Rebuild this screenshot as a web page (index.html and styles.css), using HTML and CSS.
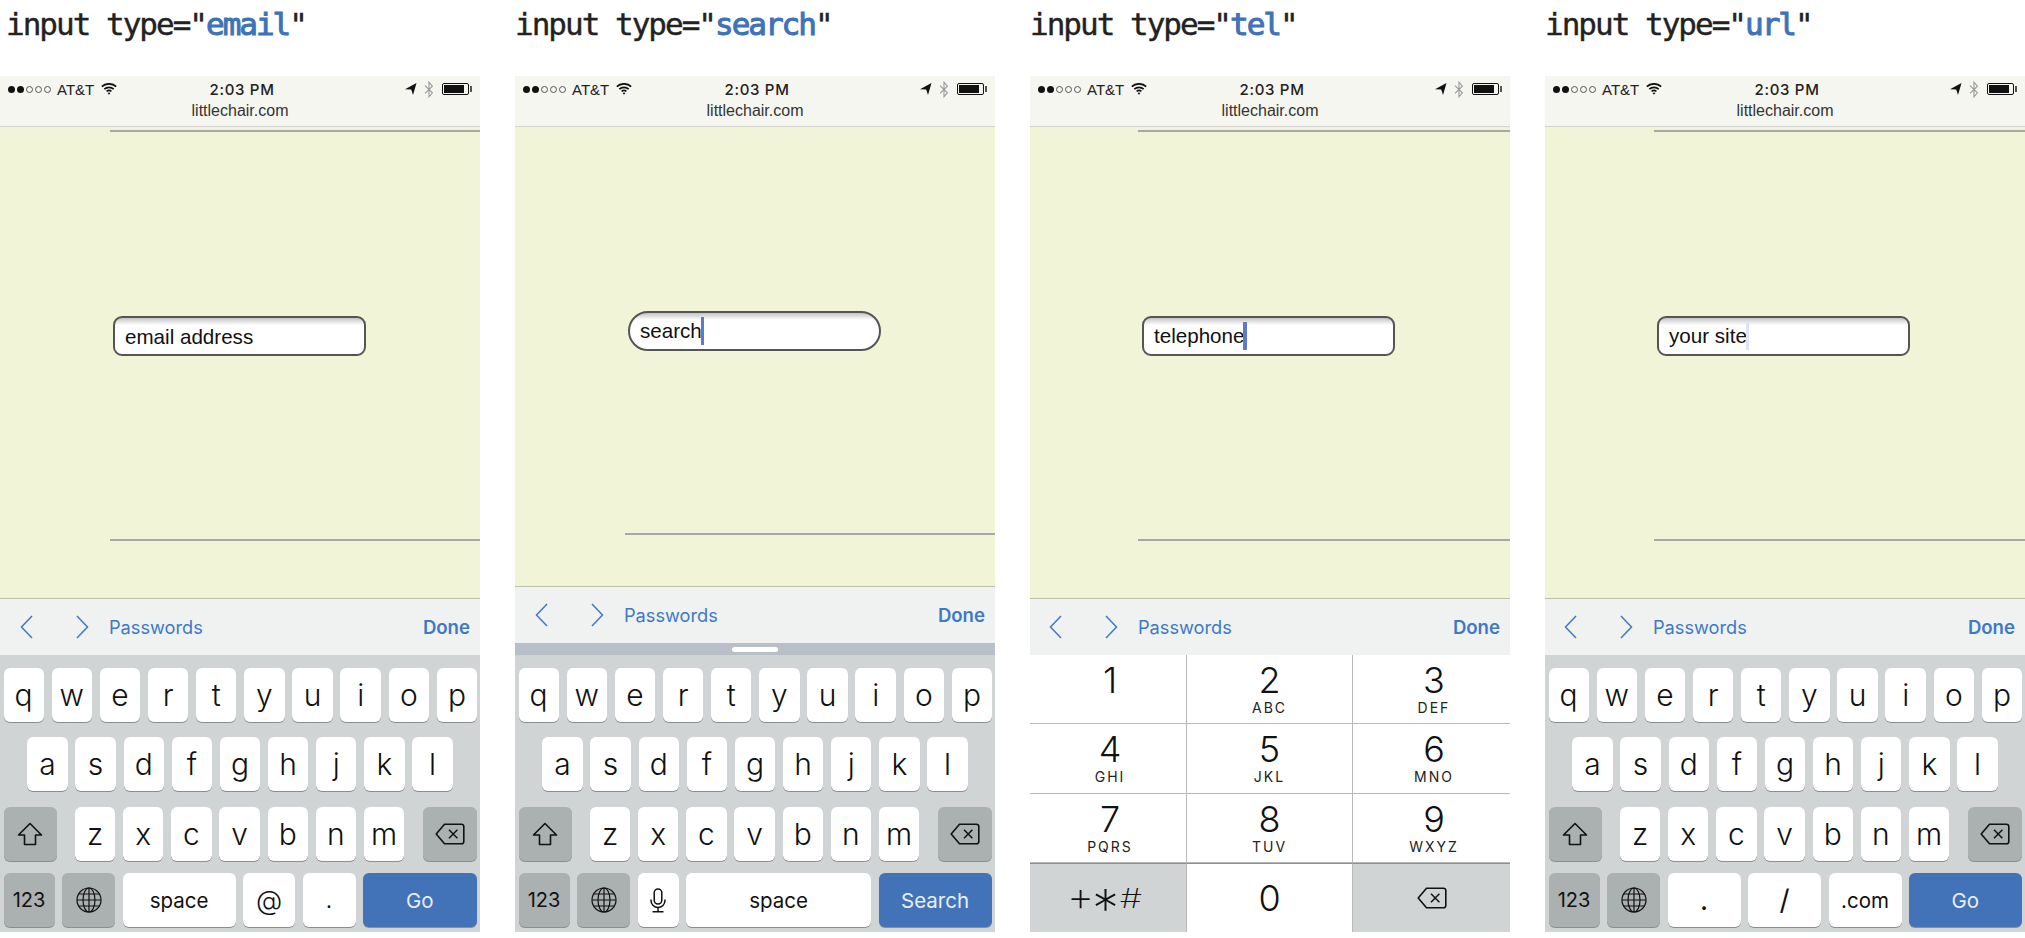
FILE: index.html
```html
<!DOCTYPE html>
<html>
<head>
    <title>input types on iOS</title>
    <link rel="stylesheet" href="styles.css">
</head>
<body>
    <svg class="defs" xmlns="http://www.w3.org/2000/svg">
        <symbol id="i-wifi" viewBox="0 0 16 12"><path d="M.8 3.6C4.8-.1 11.2-.1 15.2 3.6M3.3 6.1c2.7-2.4 6.7-2.4 9.4 0M5.6 8.4c1.4-1.1 3.4-1.1 4.8 0" fill="none" stroke="#111" stroke-width="1.7"/><path d="M6.6 10 8 11.7 9.4 10a2.2 2.2 0 0 0-2.8 0z" fill="#111"/></symbol>
        <symbol id="i-loc" viewBox="0 0 12 12"><path d="M0 6.2 11.5 0 8 12 6.2 6.4z" fill="#111"/></symbol>
        <symbol id="i-bt" viewBox="0 0 10 17"><path d="M1 4.6 8.4 11.8 5 15.8V1.2L8.4 5.2 1 12.4" fill="none" stroke="#9a9a9a" stroke-width="1.1"/></symbol>
        <symbol id="i-back" viewBox="0 0 13 24"><path d="M12 1 1.5 12 12 23" fill="none" stroke="#3d79c8" stroke-width="1.5"/></symbol>
        <symbol id="i-next" viewBox="0 0 13 24"><path d="M1 1 11.5 12 1 23" fill="none" stroke="#3d79c8" stroke-width="1.5"/></symbol>
        <symbol id="i-shift" viewBox="0 0 26 24"><path d="M13 1.5 24.5 13H18.5V22.5H7.5V13H1.5z" fill="none" stroke="#111" stroke-width="1.6" stroke-linejoin="round"/></symbol>
        <symbol id="i-del" viewBox="0 0 30 22"><path d="M9.5 1.2H26.5A2.3 2.3 0 0 1 28.8 3.5V18.5A2.3 2.3 0 0 1 26.5 20.8H9.5L1.2 11z" fill="none" stroke="#111" stroke-width="1.6" stroke-linejoin="round"/><path d="M14 6.8 22.4 15.2M22.4 6.8 14 15.2" fill="none" stroke="#111" stroke-width="1.5"/></symbol>
        <symbol id="i-globe" viewBox="0 0 26 26"><g fill="none" stroke="#111" stroke-width="1.2"><circle cx="13" cy="13" r="12"/><ellipse cx="13" cy="13" rx="6" ry="12"/><path d="M13 1V25M1 13H25M2.6 7H23.4M2.6 19H23.4"/></g></symbol>
        <symbol id="i-mic" viewBox="0 0 16 25"><g fill="none" stroke="#111" stroke-width="1.5"><rect x="4.2" y="1" width="7.6" height="15" rx="3.8"/><path d="M1 11.5V12.5A7 7 0 0 0 15 12.5V11.5M8 19.5V23.5M2.5 23.8H13.5"/></g></symbol>
    </svg>

    <div class="phones">
        <section class="col col-first">
            <h2 class="type-title">input type="<b>email</b>"</h2>
            <div class="phone">
                <div class="status">
                    <div class="status-top">
                        <div class="carrier"><i class="dot"></i><i class="dot"></i><i class="dot off"></i><i class="dot off"></i><i class="dot off"></i><span class="att">AT&amp;T</span><svg class="wifi"><use href="#i-wifi"/></svg></div>
                        <div class="time">2:03 PM</div>
                        <div class="indicators"><svg class="loc"><use href="#i-loc"/></svg><svg class="bt"><use href="#i-bt"/></svg><span class="battery"><span class="charge"></span></span></div>
                    </div>
                    <div class="site">littlechair.com</div>
                </div>
                <div class="page">
                    <div class="box"><div class="field">email address</div></div>
                </div>
                <div class="accessory">
                    <svg class="chev"><use href="#i-back"/></svg>
                    <svg class="chev chev-next"><use href="#i-next"/></svg>
                    <span class="pw">Passwords</span>
                    <span class="done">Done</span>
                </div>
                <div class="kb">
                    <div class="row"><span class="key">q</span><span class="key">w</span><span class="key">e</span><span class="key">r</span><span class="key">t</span><span class="key">y</span><span class="key">u</span><span class="key">i</span><span class="key">o</span><span class="key">p</span></div>
                    <div class="row row-mid"><span class="key">a</span><span class="key">s</span><span class="key">d</span><span class="key">f</span><span class="key">g</span><span class="key">h</span><span class="key">j</span><span class="key">k</span><span class="key">l</span></div>
                    <div class="row row-low"><span class="key fn k-shift"><svg class="ic-shift"><use href="#i-shift"/></svg></span><span class="key">z</span><span class="key">x</span><span class="key">c</span><span class="key">v</span><span class="key">b</span><span class="key">n</span><span class="key">m</span><span class="key fn k-del"><svg class="ic-del"><use href="#i-del"/></svg></span></div>
                    <div class="row row-bottom"><span class="key fn k-123">123</span><span class="key fn k-globe"><svg class="ic-globe"><use href="#i-globe"/></svg></span><span class="key small k-space">space</span><span class="key k-at">@</span><span class="key small k-dot">.</span><span class="key go">Go</span></div>
                </div>
            </div>
        </section>

        <section class="col">
            <h2 class="type-title">input type="<b>search</b>"</h2>
            <div class="phone">
                <div class="status">
                    <div class="status-top">
                        <div class="carrier"><i class="dot"></i><i class="dot"></i><i class="dot off"></i><i class="dot off"></i><i class="dot off"></i><span class="att">AT&amp;T</span><svg class="wifi"><use href="#i-wifi"/></svg></div>
                        <div class="time">2:03 PM</div>
                        <div class="indicators"><svg class="loc"><use href="#i-loc"/></svg><svg class="bt"><use href="#i-bt"/></svg><span class="battery"><span class="charge"></span></span></div>
                    </div>
                    <div class="site">littlechair.com</div>
                </div>
                <div class="page page-scrolled">
                    <div class="box"><div class="field field-search">search<span class="caret"></span></div></div>
                </div>
                <div class="accessory">
                    <svg class="chev"><use href="#i-back"/></svg>
                    <svg class="chev chev-next"><use href="#i-next"/></svg>
                    <span class="pw">Passwords</span>
                    <span class="done">Done</span>
                </div>
                <div class="handle-bar"><span class="handle"></span></div>
                <div class="kb">
                    <div class="row"><span class="key">q</span><span class="key">w</span><span class="key">e</span><span class="key">r</span><span class="key">t</span><span class="key">y</span><span class="key">u</span><span class="key">i</span><span class="key">o</span><span class="key">p</span></div>
                    <div class="row row-mid"><span class="key">a</span><span class="key">s</span><span class="key">d</span><span class="key">f</span><span class="key">g</span><span class="key">h</span><span class="key">j</span><span class="key">k</span><span class="key">l</span></div>
                    <div class="row row-low"><span class="key fn k-shift"><svg class="ic-shift"><use href="#i-shift"/></svg></span><span class="key">z</span><span class="key">x</span><span class="key">c</span><span class="key">v</span><span class="key">b</span><span class="key">n</span><span class="key">m</span><span class="key fn k-del"><svg class="ic-del"><use href="#i-del"/></svg></span></div>
                    <div class="row row-bottom"><span class="key fn k-123">123</span><span class="key fn k-globe"><svg class="ic-globe"><use href="#i-globe"/></svg></span><span class="key k-mic"><svg class="ic-mic"><use href="#i-mic"/></svg></span><span class="key small k-space-long">space</span><span class="key go">Search</span></div>
                </div>
            </div>
        </section>

        <section class="col col-tel">
            <h2 class="type-title">input type="<b>tel</b>"</h2>
            <div class="phone">
                <div class="status">
                    <div class="status-top">
                        <div class="carrier"><i class="dot"></i><i class="dot"></i><i class="dot off"></i><i class="dot off"></i><i class="dot off"></i><span class="att">AT&amp;T</span><svg class="wifi"><use href="#i-wifi"/></svg></div>
                        <div class="time">2:03 PM</div>
                        <div class="indicators"><svg class="loc"><use href="#i-loc"/></svg><svg class="bt"><use href="#i-bt"/></svg><span class="battery"><span class="charge"></span></span></div>
                    </div>
                    <div class="site">littlechair.com</div>
                </div>
                <div class="page">
                    <div class="box"><div class="field">telephone<span class="caret"></span></div></div>
                </div>
                <div class="accessory">
                    <svg class="chev"><use href="#i-back"/></svg>
                    <svg class="chev chev-next"><use href="#i-next"/></svg>
                    <span class="pw">Passwords</span>
                    <span class="done">Done</span>
                </div>
                <div class="numpad">
                    <div class="num"><span class="digit">1</span></div>
                    <div class="num"><span class="digit">2</span><span class="abc">ABC</span></div>
                    <div class="num"><span class="digit">3</span><span class="abc">DEF</span></div>
                    <div class="num"><span class="digit">4</span><span class="abc">GHI</span></div>
                    <div class="num"><span class="digit">5</span><span class="abc">JKL</span></div>
                    <div class="num"><span class="digit">6</span><span class="abc">MNO</span></div>
                    <div class="num"><span class="digit">7</span><span class="abc">PQRS</span></div>
                    <div class="num"><span class="digit">8</span><span class="abc">TUV</span></div>
                    <div class="num"><span class="digit">9</span><span class="abc">WXYZ</span></div>
                    <div class="num num-fn"><span class="symbols"><span class="plus">+</span><span class="star">*</span><span class="hash">#</span></span></div>
                    <div class="num num-zero"><span class="digit">0</span></div>
                    <div class="num num-fn"><svg class="ic-del"><use href="#i-del"/></svg></div>
                </div>
            </div>
        </section>

        <section class="col col-url">
            <h2 class="type-title">input type="<b>url</b>"</h2>
            <div class="phone">
                <div class="status">
                    <div class="status-top">
                        <div class="carrier"><i class="dot"></i><i class="dot"></i><i class="dot off"></i><i class="dot off"></i><i class="dot off"></i><span class="att">AT&amp;T</span><svg class="wifi"><use href="#i-wifi"/></svg></div>
                        <div class="time">2:03 PM</div>
                        <div class="indicators"><svg class="loc"><use href="#i-loc"/></svg><svg class="bt"><use href="#i-bt"/></svg><span class="battery"><span class="charge"></span></span></div>
                    </div>
                    <div class="site">littlechair.com</div>
                </div>
                <div class="page">
                    <div class="box"><div class="field">your site<span class="caret caret-faint"></span></div></div>
                </div>
                <div class="accessory">
                    <svg class="chev"><use href="#i-back"/></svg>
                    <svg class="chev chev-next"><use href="#i-next"/></svg>
                    <span class="pw">Passwords</span>
                    <span class="done">Done</span>
                </div>
                <div class="kb">
                    <div class="row"><span class="key">q</span><span class="key">w</span><span class="key">e</span><span class="key">r</span><span class="key">t</span><span class="key">y</span><span class="key">u</span><span class="key">i</span><span class="key">o</span><span class="key">p</span></div>
                    <div class="row row-mid"><span class="key">a</span><span class="key">s</span><span class="key">d</span><span class="key">f</span><span class="key">g</span><span class="key">h</span><span class="key">j</span><span class="key">k</span><span class="key">l</span></div>
                    <div class="row row-low"><span class="key fn k-shift"><svg class="ic-shift"><use href="#i-shift"/></svg></span><span class="key">z</span><span class="key">x</span><span class="key">c</span><span class="key">v</span><span class="key">b</span><span class="key">n</span><span class="key">m</span><span class="key fn k-del"><svg class="ic-del"><use href="#i-del"/></svg></span></div>
                    <div class="row row-bottom"><span class="key fn k-123">123</span><span class="key fn k-globe"><svg class="ic-globe"><use href="#i-globe"/></svg></span><span class="key k-url">.</span><span class="key k-url">/</span><span class="key small k-url">.com</span><span class="key go">Go</span></div>
                </div>
            </div>
        </section>
    </div>
</body>
</html>
```

FILE: styles.css
```css
:root {
    --page: #f1f4d6;
    --bar: #f6f6f1;
    --accessory: #f0f1f1;
    --kb: #d1d4d5;
    --fn: #abb1b0;
    --blue: #4273b8;
    --link: #3d79c8;
}
body { margin: 0; background: #fff; color: #111; font-family: 'Inter', 'Liberation Sans', sans-serif; overflow: hidden; }
.defs { display: none; }
.phones { display: flex; gap: 35px; }
.col { width: 480px; flex: none; }
.type-title { margin: 0; height: 76px; padding-top: 4px; box-sizing: border-box; font-family: 'DejaVu Sans Mono', monospace; font-size: 31px; line-height: 40px; letter-spacing: -2px; font-weight: normal; color: #222; white-space: pre; -webkit-text-stroke: .4px #222; }
.type-title b { color: #3f72b8; font-weight: normal; -webkit-text-stroke: 1px #3f72b8; }
.col-first .type-title { padding-left: 6px; }
.phone { height: 856px; display: flex; flex-direction: column; }

/* status bar */
.status { height: 51px; box-sizing: border-box; background: var(--bar); border-bottom: 1px solid #d3d3cd; flex: none; }
.status-top { display: grid; grid-template-columns: 1fr auto 1fr; align-items: center; height: 26px; padding: 0 11px 0 8px; }
.carrier, .indicators { display: flex; align-items: center; }
.indicators { justify-content: flex-end; }
.dot { width: 7px; height: 7px; border-radius: 50%; background: #111; margin-right: 2px; box-sizing: border-box; }
.dot.off { background: none; border: 1px solid #555; }
.att { font-family: 'Liberation Sans', sans-serif; font-size: 15px; margin: 0 7px 0 4px; color: #222; }
.wifi { width: 16px; height: 12px; }
.time { font-size: 15px; font-weight: 500; letter-spacing: .7px; color: #222; margin-left: 7px; }
.loc { width: 12px; height: 12px; margin-right: 7px; }
.bt { width: 10px; height: 17px; margin-right: 8px; }
.battery { display: block; width: 27px; height: 12px; box-sizing: border-box; border: 1px solid #111; border-radius: 2px; padding: 1px; position: relative; }
.battery::after { content: ""; position: absolute; right: -4px; top: 2px; width: 2px; height: 6px; background: #555; }
.charge { display: block; width: 20px; height: 8px; background: #111; }
.site { text-align: center; font-family: 'Liberation Sans', sans-serif; font-size: 16px; line-height: 18px; color: #333; }

/* page */
.page { flex: 1; background: var(--page); padding-top: 3px; }
.box { margin-left: 110px; height: 411px; box-sizing: border-box; border-top: 2px solid #a8a8a8; border-bottom: 2px solid #a8a8a8; padding: 184px 0 0 3px; }
.page-scrolled { padding-top: 0; }
.page-scrolled .box { height: 408px; border-top: 0; }
.col-tel .box { margin-left: 108px; padding-left: 4px; }
.col-url .box { margin-left: 109px; padding-left: 3px; }
.field { width: 253px; height: 40px; box-sizing: border-box; border: 2px solid #555; border-radius: 9px; background: linear-gradient(#c4c4c4, #fff 7px); padding: 0 0 2px 10px; font-family: 'Liberation Sans', sans-serif; font-size: 20.6px; line-height: 35px; color: #111; display: flex; align-items: center; }
.col-first .field { padding-bottom: 0; }
.field-search { border-radius: 20px; }
.caret { width: 3.5px; height: 28px; margin: 2px 0 0 -1px; background: #5f78c8; }
.caret-faint { background: #dde4f5; }

/* accessory bar */
.accessory { height: 57px; box-sizing: border-box; flex: none; background: var(--accessory); border-top: 1px solid #bdbfa9; display: flex; align-items: center; padding: 0 10px 0 20px; }
.chev { width: 13px; height: 24px; }
.chev-next { margin-left: 43px; }
.pw { margin-left: 20px; font-size: 18.2px; color: var(--link); }
.col-tel .accessory, .col-url .accessory { padding-left: 19px; }
.done { margin-left: auto; font-size: 18.6px; font-weight: 600; color: var(--link); }
.handle-bar { height: 12px; background: #b8bfc8; display: flex; align-items: center; justify-content: center; flex: none; }
.handle { width: 46px; height: 5px; border-radius: 3px; background: #fff; }

/* letter keyboard */
.kb { height: 277px; box-sizing: border-box; background: var(--kb); padding: 13px 3.5px 0; flex: none; }
.row { display: flex; gap: 7.85px; height: 55px; margin-bottom: 14px; }
.row-mid { justify-content: center; }
.row-low { margin: 15px 0 11px; }
.row-bottom { gap: 7.5px; margin: 0; }
.key { width: 40.3px; height: 54px; flex: none; display: flex; align-items: center; justify-content: center; background: #fff; border-radius: 6px; box-shadow: 0 1px 0 #8a8d91; font-size: 30px; font-weight: 350; color: #111; }
.fn { background: var(--fn); }
.k-shift, .k-del { width: 53.5px; }
.k-shift { margin-right: 10.2px; }
.k-del { margin-left: auto; }
.small { font-size: 20.5px; font-weight: 400; }
.k-123 { width: 51px; font-size: 20px; font-weight: 400; }
.k-globe { width: 53px; }
.k-space { width: 113px; }
.k-at { width: 52px; font-size: 27px; font-weight: 300; }
.k-dot { width: 53px; }
.k-mic { width: 41px; }
.k-space-long { width: 185px; }
.k-url { width: 73px; font-size: 28px; font-weight: 400; }
.k-url.small { font-size: 20.5px; }
.go { flex: 1; width: auto; background: var(--blue); color: #e8eef8; font-size: 20.5px; font-weight: 400; }
.ic-shift { width: 26px; height: 24px; }
.ic-del { width: 30px; height: 22px; }
.ic-globe { width: 26px; height: 26px; }
.ic-mic { width: 16px; height: 25px; }

/* phone pad */
.numpad { height: 277px; flex: none; display: grid; grid-template-columns: 157px 166px 157px; grid-template-rows: repeat(4, 1fr); background: #fff; }
.num { display: flex; flex-direction: column; align-items: center; padding-top: 7px; box-sizing: border-box; border-right: 1px solid #b8b8b8; border-bottom: 1px solid #b8b8b8; }
.num:nth-child(3n+1) { padding-left: 4px; }
.num:nth-child(3n) { border-right: 0; padding-left: 5px; }
.num:nth-last-child(-n+3) { border-bottom: 0; border-top: 1px solid #8f8f8f; padding-top: 0; padding-left: 0; justify-content: center; }
.num-fn { background: var(--kb); }
.num-zero { background: #fff; }
.digit { font-size: 36px; line-height: 36px; font-weight: 300; }
.abc { font-size: 14px; line-height: 16px; letter-spacing: 2px; margin-top: 2px; color: #222; }
.symbols { display: flex; align-items: center; gap: 7px; margin-right: 5px; line-height: 32px; font-weight: 200; }
.plus, .star, .hash { display: flex; justify-content: center; width: 18px; }
.plus { font-size: 42px; margin-bottom: 3px; }
.star { font-size: 54px; margin-top: 22px; }
.hash { font-size: 27px; margin-top: 3px; transform: scaleX(1.3); }
```
